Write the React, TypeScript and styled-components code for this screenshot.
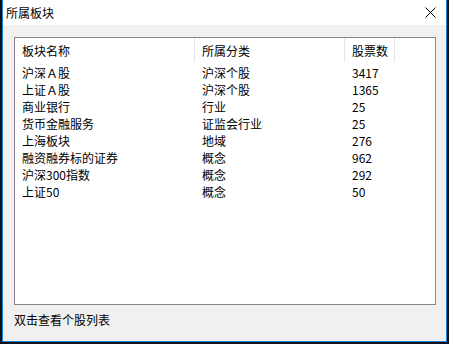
import React from "react";
import styled, { createGlobalStyle } from "styled-components";

const Global = createGlobalStyle`
  html, body { margin: 0; padding: 0; background: #0d1118; }
  body { width: 449px; height: 344px; overflow: hidden; }
  * { box-sizing: border-box; }
`;

const Window = styled.div`
  margin-left: 2px;
  width: 445px;
  height: 342px;
  background: #f0f0f0;
  border: 1px solid #1883d7;
  border-top: none;
  display: flex;
  flex-direction: column;
  font-family: "Noto Sans CJK SC", "Microsoft YaHei", sans-serif;
  font-size: 12px;
  color: #000;
`;

const TitleBar = styled.div`
  height: 25px;
  background: #fff;
  display: flex;
  align-items: center;
  justify-content: space-between;
  padding: 0 10px 0 3px;
  flex-shrink: 0;
`;

const Title = styled.span`
  font-size: 12px;
  line-height: 25px;
`;

const Close = styled.svg`
  width: 11px;
  height: 11px;
  display: block;
`;

const Body = styled.div`
  flex: 1;
  display: flex;
  flex-direction: column;
  padding: 12px 10px 0 11px;
`;

const ListBox = styled.div`
  height: 268px;
  background: #fff;
  border: 1px solid #828790;
`;

const Grid = styled.div<{ $top?: number }>`
  display: grid;
  grid-template-columns: 180px 150px 50px;
  padding-top: ${(p) => p.$top ?? 0}px;
`;

const HeaderCell = styled.div`
  height: 24px;
  padding-top: 2px;
  line-height: 22px;
  padding-left: 7px;
  border-right: 1px solid #e5e5e5;
`;

const Cell = styled.div`
  height: 17px;
  line-height: 17px;
  padding-left: 7px;
  white-space: nowrap;
`;

const Footer = styled.div`
  padding-top: 6px;
  line-height: 18px;
`;

const rows: [string, string, string][] = [
  ["沪深Ａ股", "沪深个股", "3417"],
  ["上证Ａ股", "沪深个股", "1365"],
  ["商业银行", "行业", "25"],
  ["货币金融服务", "证监会行业", "25"],
  ["上海板块", "地域", "276"],
  ["融资融券标的证券", "概念", "962"],
  ["沪深300指数", "概念", "292"],
  ["上证50", "概念", "50"],
];

export default function App() {
  return (
    <>
      <Global />
      <Window>
        <TitleBar>
          <Title>所属板块</Title>
          <Close viewBox="0 0 11 11">
            <path d="M0.5 0.5 L10.5 10.5 M10.5 0.5 L0.5 10.5" stroke="#000" strokeWidth="1" fill="none" />
          </Close>
        </TitleBar>
        <Body>
          <ListBox>
            <Grid>
              <HeaderCell>板块名称</HeaderCell>
              <HeaderCell>所属分类</HeaderCell>
              <HeaderCell>股票数</HeaderCell>
            </Grid>
            <Grid $top={2}>
              {rows.map((r, i) => (
                <React.Fragment key={i}>
                  <Cell>{r[0]}</Cell>
                  <Cell>{r[1]}</Cell>
                  <Cell>{r[2]}</Cell>
                </React.Fragment>
              ))}
            </Grid>
          </ListBox>
          <Footer>双击查看个股列表</Footer>
        </Body>
      </Window>
    </>
  );
}
